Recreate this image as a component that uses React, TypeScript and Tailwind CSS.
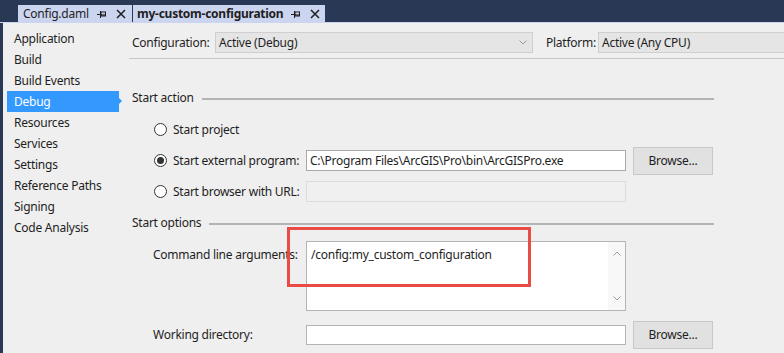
import React from "react";

const font = { fontFamily: '"Segoe UI", "Noto Sans", "Open Sans", sans-serif' };

function PinIcon() {
  return (
    <svg width="10" height="8" viewBox="0 0 10 8" className="shrink-0">
      <path d="M0 4.5h3M3.5 1v7" stroke="#1e1e1e" strokeWidth="1" fill="none" />
      <rect x="4" y="2" width="4.5" height="4" stroke="#1e1e1e" strokeWidth="1" fill="none" />
      <path d="M4 5h4.5" stroke="#1e1e1e" strokeWidth="1.2" />
    </svg>
  );
}

function CloseIcon() {
  return (
    <svg width="10" height="10" viewBox="0 0 10 10" className="shrink-0">
      <path d="M1 1l8 8M9 1l-8 8" stroke="#1e1e1e" strokeWidth="1.5" />
    </svg>
  );
}

function Chevron({ up }: { up?: boolean }) {
  return (
    <svg width="8" height="5" viewBox="0 0 8 5">
      <path d={up ? "M0.5 4.5L4 1l3.5 3.5" : "M0.5 0.5L4 4l3.5-3.5"} stroke="#9a9a9a" strokeWidth="1" fill="none" />
    </svg>
  );
}

function Radio({ checked, label }: { checked?: boolean; label: string }) {
  return (
    <div className="flex items-center gap-[6px] w-[152px]">
      <div className="w-[13px] h-[13px] rounded-full border border-[#333] bg-white flex items-center justify-center">
        {checked && <div className="w-[7px] h-[7px] rounded-full bg-[#333]" />}
      </div>
      <span>{label}</span>
    </div>
  );
}

function Heading({ title }: { title: string }) {
  return (
    <div className="flex items-center h-[20px] pr-[70px]">
      <span className="mr-[8px]">{title}</span>
      <div className="flex-1 h-[2px] bg-[#b4b4b4] mt-[1px]" />
    </div>
  );
}

function BrowseButton() {
  return (
    <button className="w-[80px] h-[28px] bg-[#e1e1e1] border border-[#c8c8c8] text-[#1e1e1e]">
      Browse...
    </button>
  );
}

export default function App() {
  const navItems = [
    "Application",
    "Build",
    "Build Events",
    "Debug",
    "Resources",
    "Services",
    "Settings",
    "Reference Paths",
    "Signing",
    "Code Analysis",
  ];

  return (
    <div className="w-[784px] h-[353px] bg-[#293955] overflow-hidden flex flex-col text-[12px] tracking-[-0.25px] text-[#1e1e1e]" style={font}>
      {/* tab strip */}
      <div className="h-[22px] flex items-end pl-[18px] shrink-0">
        <div className="h-[17px] w-[114px] bg-[#ccd5f0] flex items-center pl-[5px] pr-[6px]">
          <span className="flex-1">Config.daml</span>
          <PinIcon />
          <div className="w-[9px]" />
          <CloseIcon />
        </div>
        <div className="w-[1px] h-[17px] bg-[#293955]" />
        <div className="h-[17px] w-[192px] bg-[#ccd5f0] flex items-center pl-[4px] pr-[5px]">
          <span className="flex-1 font-bold">my-custom-configuration</span>
          <PinIcon />
          <div className="w-[9px]" />
          <CloseIcon />
        </div>
      </div>
      <div className="h-[1px] bg-[#ccd5f0] shrink-0" />

      {/* body */}
      <div className="flex-1 flex ml-[3px] bg-[#efefef] min-h-0">
        {/* nav */}
        <div className="w-[126px] pt-[5px] pl-[4px] shrink-0">
          {navItems.map((item) =>
            item === "Debug" ? (
              <div key={item} className="relative w-[112px] h-[21px] bg-[#3399ff] text-white flex items-center pl-[7px]">
                {item}
                <div className="absolute right-[-3px] top-[7px] w-0 h-0 border-y-[3.5px] border-y-transparent border-l-[3px] border-l-[#3399ff]" />
              </div>
            ) : (
              <div key={item} className="h-[21px] flex items-center pl-[7px]">
                {item}
              </div>
            )
          )}
        </div>

        {/* content */}
        <div className="flex-1 flex flex-col">
          <div className="flex items-center h-[36px] pt-[4px] border-b border-[#c6c6c6] pl-[3px]">
            <span className="w-[83px]">Configuration:</span>
            <div className="w-[318px] h-[21px] bg-[#e5e5e5] border border-[#cfcfcf] flex items-center pl-[3px] pr-[5px]">
              <span className="flex-1">Active (Debug)</span>
              <Chevron />
            </div>
            <span className="ml-[13px] w-[52px]">Platform:</span>
            <div className="flex-1 h-[21px] bg-[#e5e5e5] border border-[#cfcfcf] border-r-0 flex items-center pl-[3px]">
              Active (Any CPU)
            </div>
          </div>

          <div className="pl-[3px] mt-[29px]">
            <Heading title="Start action" />
          </div>

          <div className="pl-[25px] flex flex-col mt-[11px] gap-[10px]">
            <div className="h-[21px] flex items-center">
              <Radio label="Start project" />
            </div>
            <div className="h-[21px] flex items-center">
              <Radio checked label="Start external program:" />
              <div className="w-[320px] h-[21px] bg-white border border-[#a9a9a9] flex items-center pl-[3px]">
                C:\Program Files\ArcGIS\Pro\bin\ArcGISPro.exe
              </div>
              <div className="ml-[7px]">
                <BrowseButton />
              </div>
            </div>
            <div className="h-[21px] flex items-center">
              <Radio label="Start browser with URL:" />
              <div className="w-[320px] h-[21px] bg-[#f0f0f0] border border-[#dcdcdc]" />
            </div>
          </div>

          <div className="pl-[3px] mt-[11px]">
            <Heading title="Start options" />
          </div>

          <div className="pl-[24px] flex mt-[8px]">
            <span className="w-[153px] pt-[5px]">Command line arguments:</span>
            <div className="relative w-[320px] h-[70px] bg-white border border-[#b4b4b4] flex">
              <div className="flex-1 pl-[4px] pt-[4px]">/config:my_custom_configuration</div>
              <div className="w-[17px] flex flex-col items-center justify-between py-[9px] bg-[#f8f8f8]">
                <Chevron up />
                <Chevron />
              </div>
              <div className="absolute left-[-20px] top-[-15px] w-[244px] h-[60px] border-[3px] border-[#e84c45]" />
            </div>
          </div>

          <div className="pl-[24px] flex items-center mt-[10px]">
            <span className="w-[153px]">Working directory:</span>
            <div className="w-[320px] h-[20px] bg-white border border-[#b4b4b4]" />
            <div className="ml-[7px]">
              <BrowseButton />
            </div>
          </div>
        </div>
      </div>
    </div>
  );
}
